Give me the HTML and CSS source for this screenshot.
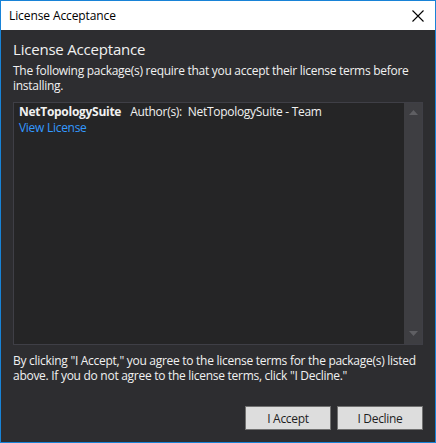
FILE: index.html
```html
<!DOCTYPE html>
<html>
<head>
<meta charset="utf-8">
<link rel="stylesheet" href="styles.css">
</head>
<body>
<div class="window">
  <div class="titlebar">
    <span class="title">License Acceptance</span>
    <svg class="close" width="12" height="12" viewBox="0 0 12 12"><path d="M0.5 0.5 L11.5 11.5 M11.5 0.5 L0.5 11.5" stroke="#000" stroke-width="1.1" fill="none"/></svg>
  </div>
  <div class="content">
    <h1 class="heading">License Acceptance</h1>
    <p class="intro">The following package(s) require that you accept their license terms before installing.</p>
    <div class="listbox">
      <div class="items">
        <div class="item">
          <div class="item-head"><span class="pkg">NetTopologySuite</span><span class="author">Author(s):&nbsp; NetTopologySuite - Team</span></div>
          <a class="link" href="#">View License</a>
        </div>
      </div>
      <div class="scrollbar">
        <svg width="9" height="5" viewBox="0 0 9 5"><path d="M0 5 L4.5 0 L9 5 Z" fill="#5f5f63"/></svg>
        <svg width="9" height="5" viewBox="0 0 9 5"><path d="M0 0 L4.5 5 L9 0 Z" fill="#5f5f63"/></svg>
      </div>
    </div>
    <p class="notice">By clicking "I Accept," you agree to the license terms for the package(s) listed above. If you do not agree to the license terms, click "I Decline."</p>
    <div class="buttons">
      <button class="btn">I Accept</button>
      <button class="btn">I Decline</button>
    </div>
  </div>
</div>
</body>
</html>
```
FILE: styles.css
```css
* { box-sizing: border-box; }
html, body { margin: 0; padding: 0; background: #2d2d30; }
body { font-family: "Open Sans", "Noto Sans", sans-serif; }
.window {
  width: 436px;
  height: 443px;
  border: 1px solid #1883d7;
  background: #2d2d30;
  display: flex;
  flex-direction: column;
}
.titlebar {
  height: 29px;
  background: #ffffff;
  display: flex;
  align-items: center;
  justify-content: space-between;
  padding: 0 11px 0 8px;
  flex: none;
}
.title { font-size: 12px; color: #000; letter-spacing: -0.1px; }
.close { display: block; }
.content {
  flex: 1;
  display: flex;
  flex-direction: column;
  padding: 9px 12px 12px 12px;
  color: #f1f1f1;
}
.heading {
  margin: 0;
  font-size: 15px;
  font-weight: normal;
  line-height: 20px;
  letter-spacing: -0.2px;
}
.intro, .notice {
  margin: 0;
  font-size: 12px;
  line-height: 15px;
  letter-spacing: -0.28px;
}
.intro { margin-top: 4px; }
.listbox {
  margin-top: 9px;
  height: 243px;
  border: 1px solid #3f3f46;
  background: #252526;
  display: flex;
}
.items { flex: 1; padding: 0 5px; }
.item { font-size: 12px; letter-spacing: -0.28px; }
.item-head { line-height: 17px; }
.pkg { font-weight: bold; margin-right: 9px; }
.link { display: block; color: #3399ff; text-decoration: none; line-height: 15px; }
.scrollbar {
  width: 18px;
  background: #3e3e42;
  display: flex;
  flex-direction: column;
  justify-content: space-between;
  align-items: center;
  padding: 7px 0 8px;
}
.scrollbar svg { display: block; }
.notice { margin-top: 8px; }
.buttons {
  margin-top: auto;
  display: flex;
  justify-content: flex-end;
  gap: 6px;
}
.btn {
  width: 86px;
  height: 24px;
  background: #dddddd;
  border: 1px solid #707070;
  font-family: inherit;
  font-size: 12px;
  color: #1e1e1e;
  letter-spacing: -0.3px;
  padding: 0;
}
```
